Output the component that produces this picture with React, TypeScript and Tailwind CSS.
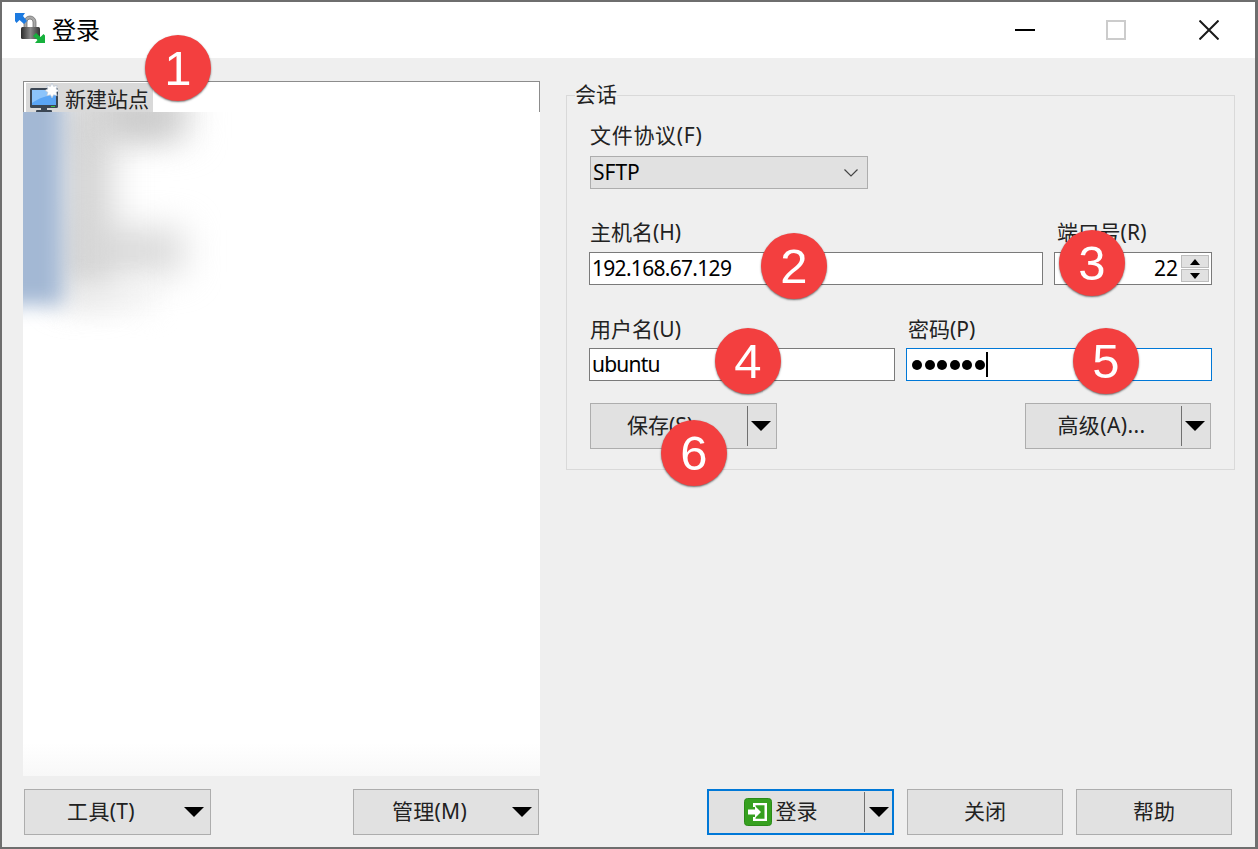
import React from 'react';

const Caret = () => (
  <svg width="20" height="10" viewBox="0 0 20 10" className="shrink-0">
    <path d="M0 0H20L10 10Z" fill="#000" />
  </svg>
);

const LockIcon = () => (
  <svg width="32" height="32" viewBox="0 0 32 32" className="shrink-0">
    <defs>
      <linearGradient id="lockBody" x1="0" y1="0" x2="1" y2="0">
        <stop offset="0" stopColor="#2a2a2a" />
        <stop offset="0.5" stopColor="#8a8a8a" />
        <stop offset="1" stopColor="#333" />
      </linearGradient>
    </defs>
    <path d="M9 15V9a6 6 0 0 1 12 0v6h-3V9a3 3 0 0 0-6 0v6Z" fill="#a8a8a8" stroke="#666" strokeWidth="0.7" />
    <rect x="6" y="14" width="19" height="12" rx="1.5" fill="url(#lockBody)" />
    <path d="M0 0H10L8 3L12 8L9 11L4.500 7L1.500 10L0 8Z" fill="#1c7ae0" />
    <path d="M30 30H20L22.500 27L18 23L21 20L25.500 24L28.500 21L30 22.500Z" fill="#16b13c" />
  </svg>
);

const SiteIcon = () => (
  <svg width="32" height="30" viewBox="0 0 32 30" className="shrink-0">
    <rect x="1" y="5" width="28" height="20" rx="1.5" fill="#3b4654" />
    <rect x="3" y="7" width="24" height="15" fill="#5aa5f5" />
    <path d="M3 7h24v5C18 12 10 15 3 20Z" fill="#8cc4fb" />
    <rect x="22" y="23" width="4" height="1" fill="#43c24a" />
    <rect x="12" y="25" width="6" height="2" fill="#3b4654" />
    <rect x="7" y="27" width="16" height="2.500" rx="1" fill="#3b4654" />
    <path
      d="M23 0l1.600 3.400 3.600-1-1 3.600L30 7.600l-2.800 1.600 1 3.600-3.600-1L23 15l-1.600-3.200-3.600 1 1-3.600L16 7.600l2.800-1.600-1-3.600 3.600 1Z"
      fill="#fff"
      stroke="#b9c6d6"
      strokeWidth="0.7"
    />
  </svg>
);

const LoginIcon = () => (
  <svg width="28" height="28" viewBox="0 0 28 28" className="shrink-0">
    <rect x="0.500" y="0.500" width="27" height="27" rx="3" fill="#36a01f" stroke="#2b8a18" />
    <path d="M9 5h14v18H9v-4h2.500v1.800h9V7.200h-9V9H9Z" fill="#fff" />
    <path d="M4 11.500h7V8l6 6-6 6v-3.500H4Z" fill="#fff" />
  </svg>
);

function Badge({ n, className }: { n: number; className: string }) {
  return (
    <div
      className={`absolute w-[66px] h-[66px] rounded-full bg-[#f33f3f] shadow-[0_1px_2px_rgba(0,0,0,0.55)] flex items-center justify-center text-white text-[49px] leading-none font-['Liberation_Sans',sans-serif] ${className}`}
    >
      {n}
    </div>
  );
}

function SplitButton({ label, width, textClass }: { label: string; width: string; textClass: string }) {
  return (
    <div className={`${width} h-[46px] flex items-center bg-[#e1e1e1] border border-[#adadad]`}>
      <span className={`flex-1 text-center text-[#222] ${textClass}`}>{label}</span>
      <span className="w-px h-10 bg-[#707070] ml-1" />
      <span className="w-[28px] flex justify-center pr-[3px]">
        <Caret />
      </span>
    </div>
  );
}

function MenuButton({ label, width }: { label: string; width: string }) {
  return (
    <div className={`${width} h-[46px] flex items-center bg-[#e1e1e1] border border-[#adadad]`}>
      <span className="flex-1 text-center text-[#222] tracking-[0.3px]">{label}</span>
      <span className="w-[33px] flex justify-end pr-[6px]">
        <Caret />
      </span>
    </div>
  );
}

function PlainButton({ label }: { label: string }) {
  return (
    <div className="ml-[13px] w-[156px] h-[46px] flex items-center justify-center bg-[#e1e1e1] border border-[#adadad] text-[#222]">
      {label}
    </div>
  );
}

function FieldLabel({ text, className = '' }: { text: string; className?: string }) {
  return <div className={`h-[26px] leading-[26px] text-[#222] ${className}`}>{text}</div>;
}

export default function App() {
  return (
    <div className="relative w-[1258px] h-[849px] flex flex-col bg-[#efefef] border-t-2 border-l-2 border-r-[3px] border-b-[2px] border-[#6e6e6e] text-[21px] overflow-hidden font-['Noto_Sans','Noto_Sans_CJK_SC',sans-serif]">
      {/* title bar */}
      <div className="h-[56px] shrink-0 bg-white flex items-center">
        <span className="ml-[13px] -mt-[2px]">
          <LockIcon />
        </span>
        <span className="ml-[5px] text-[24px] leading-none text-black -mt-[1px]">登录</span>
        <div className="ml-auto flex items-center">
          <span className="w-5 h-[2px] bg-black mr-[71px]" />
          <span className="w-5 h-5 border-2 border-[#cccccc] mr-[73px]" />
          <svg width="20" height="20" viewBox="0 0 20 20" className="mr-[36px]">
            <path d="M0.500 0.500L19.500 19.500M19.500 0.500L0.500 19.500" stroke="#1a1a1a" strokeWidth="2" />
          </svg>
        </div>
      </div>

      {/* body */}
      <div className="flex-1 flex flex-col">
        <div className="flex pl-[21px] pt-[23px]">
          {/* site tree */}
          <div className="relative w-[517px] h-[695px] bg-white overflow-hidden">
            <div className="absolute inset-x-0 top-0 h-[31px] border-t border-x border-[#8c8c8c]" />
            <div className="relative h-[31px] pt-px flex">
              <div className="ml-[3px] mt-px w-[127px] h-[29px] bg-[#d9d9d9] flex items-center pl-[3px]">
                <SiteIcon />
                <span className="ml-[4px] text-[#222] text-[21px] relative top-[2px]">新建站点</span>
              </div>
            </div>
            {/* blurred-out entries */}
            <div className="absolute left-0 right-0 top-[31px] bottom-0 overflow-hidden bg-gradient-to-b from-white from-[95%] to-[#f8f8f8]">
              <div className="absolute left-[38px] top-[-10px] w-[50px] h-[195px] bg-[#d2d2d2] blur-[18px]" />
              <div className="absolute left-[50px] top-[-24px] w-[115px] h-[50px] bg-[#d4d4d4] blur-[18px]" />
              <div className="absolute left-[90px] top-[-8px] w-[60px] h-[30px] bg-[#c8c8c8] blur-[16px]" />
              <div className="absolute left-[50px] top-[118px] w-[110px] h-[42px] bg-[#d6d6d6] blur-[18px]" />
              <div className="absolute left-[40px] top-[175px] w-[90px] h-[20px] bg-[#eeeeee] blur-[14px]" />
              <div className="absolute -left-[20px] -top-[20px] w-[60px] h-[213px] bg-[#a3b8d4] blur-[10px]" />
            </div>
          </div>

          {/* session group */}
          <fieldset className="ml-[26px] mt-[3px] w-[666px] h-[386px] border border-[#d9d9d9] px-[22px] pb-0">
            <legend className="-ml-[14px] relative -top-px px-0 h-[22px] leading-[22px] text-[#222] text-[21px] bg-[#efefef]">会话</legend>

            <FieldLabel text="文件协议(F)" className="ml-px mt-[16px] tracking-[0.7px]" />
            <div className="mt-[8px] ml-px w-[278px] h-[33px] flex items-center justify-between bg-[#e1e1e1] border border-[#adadad] pl-[2px] pr-[9px] text-black">
              <span>SFTP</span>
              <svg width="14" height="8" viewBox="0 0 14 8">
                <path d="M0.500 0.500L7 7L13.500 0.500" fill="none" stroke="#444" strokeWidth="1.200" />
              </svg>
            </div>

            <div className="mt-[30px] flex">
              <div className="w-[454px]">
                <FieldLabel text="主机名(H)" className="ml-px" />
                <div className="mt-[7px] h-[33px] flex items-center bg-white border border-[#7a7a7a] pl-[2px] text-black tracking-[-0.7px]">
                  192.168.67.129
                </div>
              </div>
              <div className="ml-[11px] w-[158px]">
                <FieldLabel text="端口号(R)" className="ml-[3px] tracking-[0.2px]" />
                <div className="mt-[7px] h-[33px] flex items-center justify-end bg-white border border-[#7a7a7a] text-black">
                  <span>22</span>
                  <div className="ml-[3px] mr-[2px] flex flex-col gap-px">
                    <div className="w-[28px] h-[13px] bg-[#e1e1e1] border border-[#bdbdbd] flex items-center justify-center">
                      <svg width="10" height="6" viewBox="0 0 10 6"><path d="M5 0L10 6H0Z" fill="#000" /></svg>
                    </div>
                    <div className="w-[28px] h-[13px] bg-[#e1e1e1] border border-[#bdbdbd] flex items-center justify-center">
                      <svg width="10" height="6" viewBox="0 0 10 6"><path d="M0 0H10L5 6Z" fill="#000" /></svg>
                    </div>
                  </div>
                </div>
              </div>
            </div>

            <div className="mt-[32px] flex">
              <div className="w-[306px]">
                <FieldLabel text="用户名(U)" className="ml-px -mt-[1px]" />
                <div className="mt-[6px] h-[33px] flex items-center bg-white border border-[#7a7a7a] pl-[2px] text-black tracking-[-0.8px]">
                  ubuntu
                </div>
              </div>
              <div className="ml-[11px] w-[306px]">
                <FieldLabel text="密码(P)" className="ml-[2px] -mt-[1px]" />
                <div className="mt-[6px] h-[33px] flex items-center bg-white border border-[#0078d7] pl-[5px]">
                  <span className="flex gap-[2.5px]">
                    {[0, 1, 2, 3, 4, 5].map((i) => (
                      <span key={i} className="w-[10px] h-[10px] rounded-full bg-black" />
                    ))}
                  </span>
                  <span className="ml-px w-[2px] h-[25px] bg-black" />
                </div>
              </div>
            </div>

            <div className="mt-[22px] ml-px flex justify-between w-[621px]">
              <SplitButton label="保存(S)" width="w-[187px]" textClass="pr-[14px]" />
              <SplitButton label="高级(A)..." width="w-[186px]" textClass="tracking-[0.4px]" />
            </div>
          </fieldset>
        </div>

        {/* bottom buttons */}
        <div className="mt-[13px] pl-[22px] flex">
          <MenuButton label="工具(T)" width="w-[187px]" />
          <div className="ml-[142px]">
            <MenuButton label="管理(M)" width="w-[186px]" />
          </div>
          <div className="ml-[168px] w-[187px] h-[46px] flex items-center bg-[#e1e1e1] border-2 border-[#0078d7]">
            <span className="flex-1 flex items-center justify-center gap-1 pr-[12px] text-[#222]">
              <LoginIcon />
              登录
            </span>
            <span className="w-px h-10 bg-[#707070]" />
            <span className="w-[27px] flex justify-center">
              <Caret />
            </span>
          </div>
          <PlainButton label="关闭" />
          <PlainButton label="帮助" />
        </div>
      </div>

      {/* numbered callouts */}
      <Badge n={1} className="left-[143px] top-[33px]" />
      <Badge n={2} className="left-[759px] top-[231px]" />
      <Badge n={3} className="left-[1057px] top-[228px]" />
      <Badge n={4} className="left-[713px] top-[326px]" />
      <Badge n={5} className="left-[1071px] top-[326px]" />
      <Badge n={6} className="left-[659px] top-[418px]" />
    </div>
  );
}
